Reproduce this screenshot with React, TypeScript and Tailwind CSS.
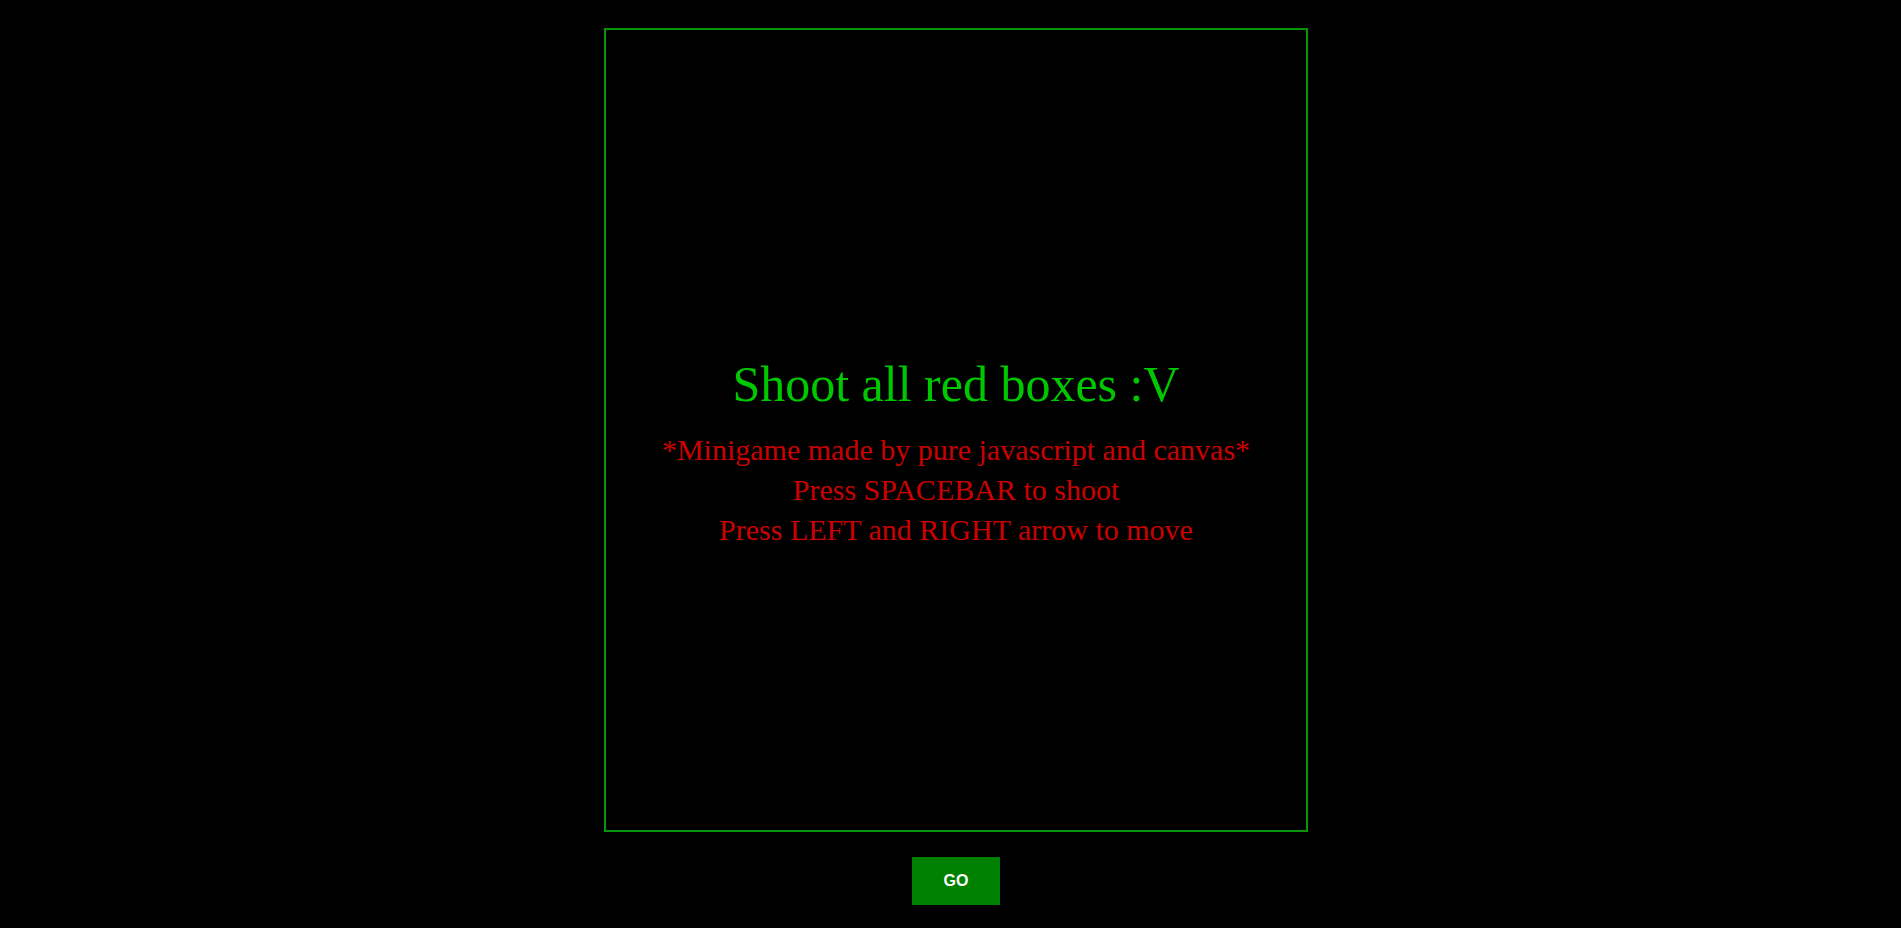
const App = () => {
  return (
    <div className="min-h-screen bg-black flex flex-col items-center pt-[28px] pl-[11px]">
      {/* game board */}
      <div
        className="w-[704px] h-[804px] border-2 border-[#0a960a] flex flex-col items-center pt-[329px] text-center"
        style={{ fontFamily: '"Liberation Serif", "Times New Roman", serif' }}
      >
        <h1 className="text-[50px] leading-[50px] text-[#00c800] whitespace-nowrap">
          Shoot all red boxes :V
        </h1>
        <div className="mt-[21px] text-[30px] leading-[40px] text-[#cc0000] whitespace-nowrap">
          <p>*Minigame made by pure javascript and canvas*</p>
          <p>Press SPACEBAR to shoot</p>
          <p>Press LEFT and RIGHT arrow to move</p>
        </div>
      </div>

      <button
        className="mt-[25px] w-[88px] h-[48px] bg-[#008000] text-white font-bold text-[16px]"
        style={{ fontFamily: '"Liberation Sans", Arial, sans-serif' }}
      >
        GO
      </button>
    </div>
  );
};

export default App;
